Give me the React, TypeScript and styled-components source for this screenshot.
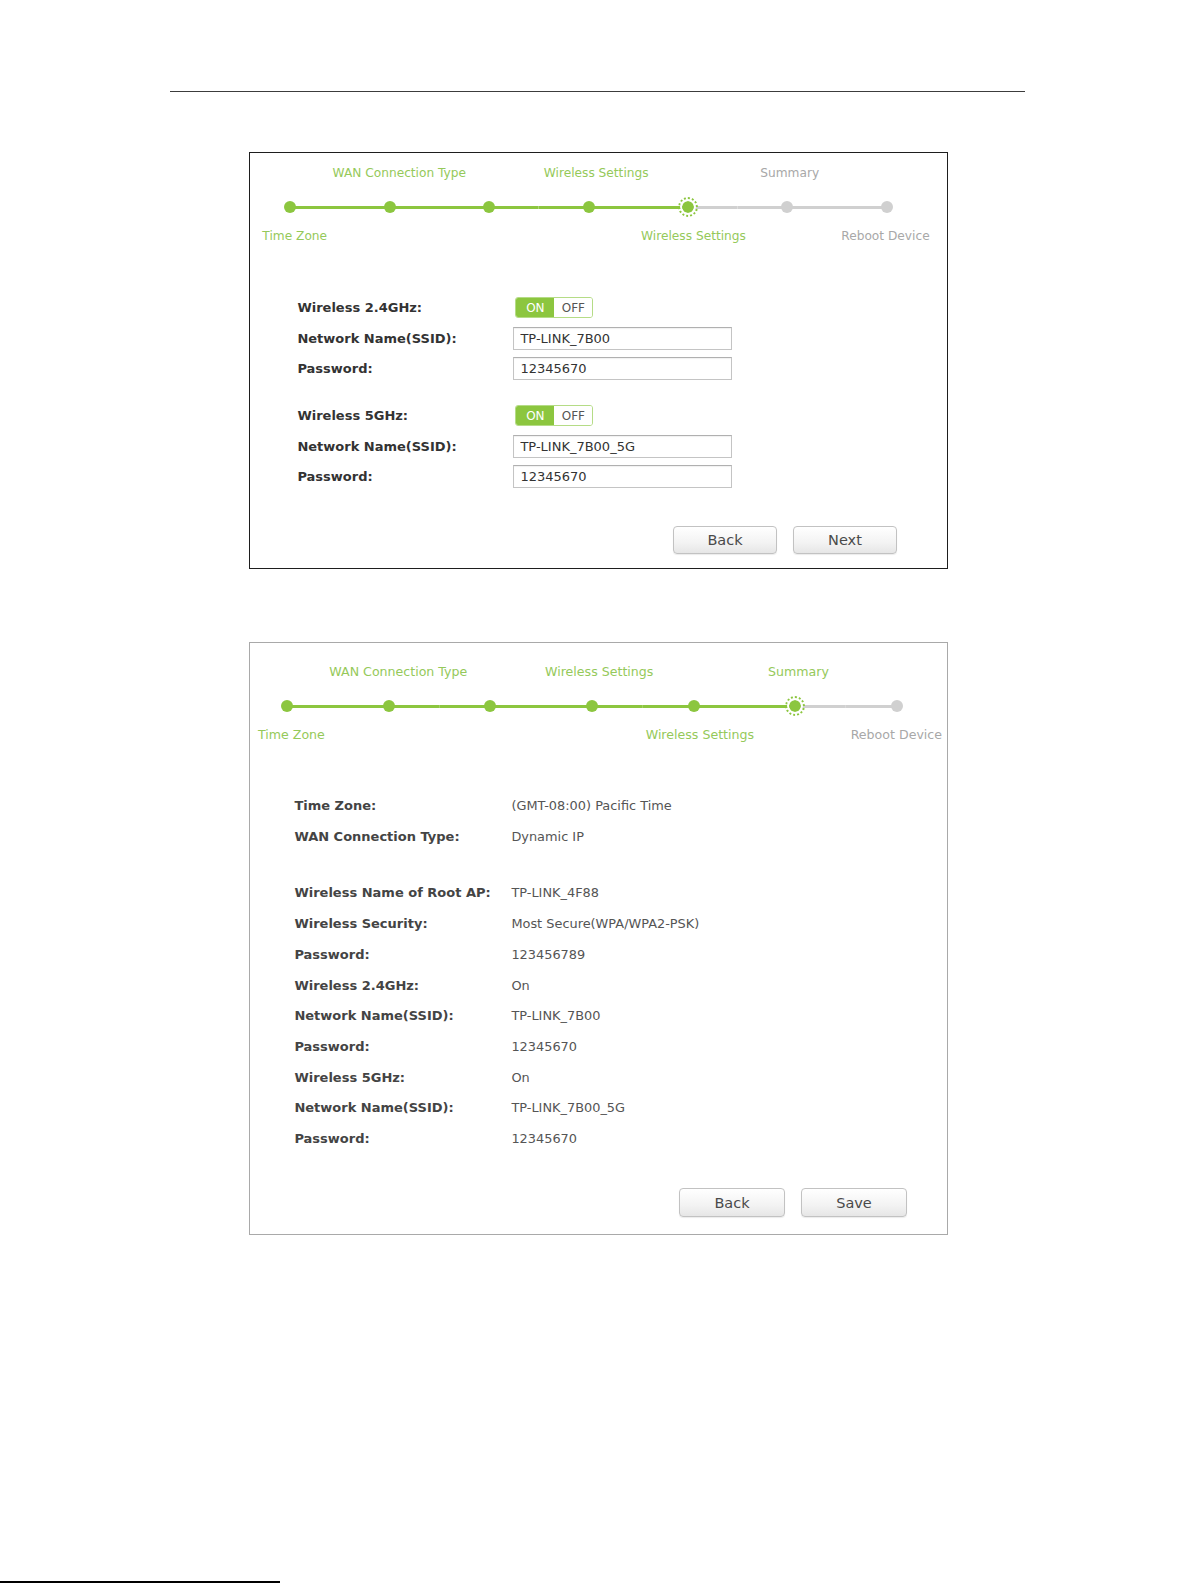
import React from "react";
import styled, { createGlobalStyle } from "styled-components";

const GREEN = "#8cc63f";
const GREEN_TEXT = "#95c95a";
const GREY = "#d0d0d0";
const GREY_TEXT = "#a8a8a8";

const GlobalStyle = createGlobalStyle`
  html, body {
    margin: 0;
    padding: 0;
    background: #ffffff;
    overflow: hidden;
  }
  body {
    font-family: "DejaVu Sans", Verdana, sans-serif;
  }
`;

const Page = styled.div`
  width: 1197px;
  height: 1583px;
  padding-top: 91px;
  box-sizing: border-box;
  display: flex;
  flex-direction: column;
`;

const HeaderRule = styled.div`
  margin-left: 170px;
  width: 855px;
  height: 1px;
  background: #3c3c3c;
`;

const FooterRule = styled.div`
  margin-top: auto;
  width: 280px;
  height: 2px;
  background: #000;
`;

const Panel = styled.div<{ $top: number; $border: string; $pt: number; $pr: number; $pb: number }>`
  margin-top: ${(p) => p.$top}px;
  margin-left: 249px;
  width: 699px;
  box-sizing: border-box;
  border: 1px solid ${(p) => p.$border};
  padding: ${(p) => p.$pt}px ${(p) => p.$pr}px ${(p) => p.$pb}px 0;
  display: flex;
  flex-direction: column;
  background: #fff;
`;

const Stepper = styled.div<{ $gap: number; $offset: number; $size: number }>`
  display: grid;
  grid-template-columns: repeat(7, ${(p) => p.$gap}px);
  margin-left: ${(p) => p.$offset}px;
  font-size: ${(p) => p.$size}px;
`;

const StepLabel = styled.div<{ $col: number; $row: number; $on: boolean; $dx: number }>`
  grid-column: ${(p) => p.$col + 1};
  grid-row: ${(p) => p.$row};
  display: flex;
  justify-content: center;
  height: 16px;
  line-height: 16px;
  white-space: nowrap;
  color: ${(p) => (p.$on ? GREEN_TEXT : GREY_TEXT)};
  transform: translateX(${(p) => p.$dx}px);
`;

const StepCell = styled.div<{ $left: string; $right: string; $mt: number }>`
  grid-row: 2;
  height: 20px;
  margin: ${(p) => p.$mt}px 0 11px;
  display: flex;
  align-items: center;
  justify-content: center;
  background-image: linear-gradient(
    to right,
    ${(p) => p.$left} 0,
    ${(p) => p.$left} 50%,
    ${(p) => p.$right} 50%,
    ${(p) => p.$right} 100%
  );
  background-size: 100% 3px;
  background-position: center;
  background-repeat: no-repeat;
`;

const Dot = styled.span<{ $state: "done" | "current" | "todo" }>`
  box-sizing: border-box;
  border-radius: 50%;
  width: ${(p) => (p.$state === "current" ? 20 : 12)}px;
  height: ${(p) => (p.$state === "current" ? 20 : 12)}px;
  background: ${(p) => (p.$state === "todo" ? GREY : GREEN)};
  background-clip: content-box;
  border: ${(p) => (p.$state === "current" ? `2px dotted ${GREEN}` : "none")};
  padding: ${(p) => (p.$state === "current" ? 2 : 0)}px;
  box-shadow: ${(p) => (p.$state === "current" ? "inset 0 0 0 2px #fff" : "none")};
`;

const Form = styled.div<{ $top: number; $left: number }>`
  margin-top: ${(p) => p.$top}px;
  margin-left: ${(p) => p.$left}px;
  display: flex;
  flex-direction: column;
`;

const Group = styled.div<{ $gap: number }>`
  display: flex;
  flex-direction: column;
  & + & {
    margin-top: ${(p) => p.$gap}px;
  }
`;

const Row = styled.div<{ $label: number; $h: number; $mb?: number }>`
  display: grid;
  grid-template-columns: ${(p) => p.$label}px 1fr;
  align-items: center;
  height: ${(p) => p.$h}px;
  margin-bottom: ${(p) => p.$mb ?? 0}px;
  &:last-child {
    margin-bottom: 0;
  }
`;

const Label = styled.span<{ $color: string }>`
  font-size: 13px;
  font-weight: bold;
  color: ${(p) => p.$color};
  white-space: nowrap;
`;

const Value = styled.span`
  font-size: 12.9px;
  color: #555;
  white-space: nowrap;
`;

const TextInput = styled.input`
  box-sizing: border-box;
  width: 219px;
  height: 23px;
  margin: 0;
  padding: 0 6px;
  border: 1px solid #c4c4c4;
  border-top-color: #b0b0b0;
  box-shadow: inset 0 1px 1px rgba(0, 0, 0, 0.06);
  font-family: "DejaVu Sans", Verdana, sans-serif;
  font-size: 13px;
  color: #333;
  outline: none;
`;

const Toggle = styled.div`
  display: flex;
  width: 78px;
  height: 21px;
  margin-left: 2px;
  box-sizing: border-box;
  border: 1px solid #b5dc86;
  border-radius: 3px;
  overflow: hidden;
  font-size: 12px;
`;

const ToggleHalf = styled.span<{ $active: boolean }>`
  flex: 1;
  display: flex;
  align-items: center;
  justify-content: center;
  background: ${(p) => (p.$active ? GREEN : "#fff")};
  color: ${(p) => (p.$active ? "#fff" : "#555")};
`;

const Actions = styled.div<{ $top: number }>`
  margin-top: ${(p) => p.$top}px;
  display: flex;
  justify-content: flex-end;
  gap: 16px;
`;

const Button = styled.button<{ $w: number; $h: number }>`
  width: ${(p) => p.$w}px;
  height: ${(p) => p.$h}px;
  box-sizing: border-box;
  border: 1px solid #c2c2c2;
  border-radius: 4px;
  background: linear-gradient(to bottom, #ffffff 0%, #f3f3f3 60%, #e6e6e6 100%);
  box-shadow: 0 1px 1px rgba(0, 0, 0, 0.08);
  font-family: "DejaVu Sans", Verdana, sans-serif;
  font-size: 14.5px;
  color: #4a4a4a;
  padding: 0;
  cursor: pointer;
`;

type StepText = { col: number; text: string; dx: number };
type StepConfig = {
  gap: number;
  offset: number;
  size: number;
  dotTop: number;
  current: number;
  top: StepText[];
  bottom: StepText[];
};

const StepBar: React.FC<{ cfg: StepConfig }> = ({ cfg }) => {
  const lineColor = (i: number) => (i <= cfg.current ? GREEN : GREY);
  return (
    <Stepper $gap={cfg.gap} $offset={cfg.offset} $size={cfg.size}>
      {cfg.top.map((t) => (
        <StepLabel key={"t" + t.col} $col={t.col} $row={1} $dx={t.dx} $on={t.col <= cfg.current}>
          {t.text}
        </StepLabel>
      ))}
      {Array.from({ length: 7 }).map((_, i) => (
        <StepCell
          key={i}
          $mt={cfg.dotTop}
          $left={i === 0 ? "transparent" : lineColor(i)}
          $right={i === 6 ? "transparent" : lineColor(i + 1)}
        >
          <Dot $state={i < cfg.current ? "done" : i === cfg.current ? "current" : "todo"} />
        </StepCell>
      ))}
      {cfg.bottom.map((t) => (
        <StepLabel key={"b" + t.col} $col={t.col} $row={3} $dx={t.dx} $on={t.col <= cfg.current}>
          {t.text}
        </StepLabel>
      ))}
    </Stepper>
  );
};

const wirelessSteps: StepConfig = {
  gap: 99.4,
  offset: -9.3,
  size: 12.2,
  dotTop: 16,
  current: 4,
  top: [
    { col: 1, text: "WAN Connection Type", dx: 9.5 },
    { col: 3, text: "Wireless Settings", dx: 7.6 },
    { col: 5, text: "Summary", dx: 2.4 },
  ],
  bottom: [
    { col: 0, text: "Time Zone", dx: 4.3 },
    { col: 4, text: "Wireless Settings", dx: 5.5 },
    { col: 6, text: "Reboot Device", dx: -1.3 },
  ],
};

const summarySteps: StepConfig = {
  gap: 101.6,
  offset: -13.5,
  size: 12.6,
  dotTop: 16.5,
  current: 5,
  top: [
    { col: 1, text: "WAN Connection Type", dx: 9.4 },
    { col: 3, text: "Wireless Settings", dx: 7.1 },
    { col: 5, text: "Summary", dx: 3.2 },
  ],
  bottom: [
    { col: 0, text: "Time Zone", dx: 4.1 },
    { col: 4, text: "Wireless Settings", dx: 6.2 },
    { col: 6, text: "Reboot Device", dx: -0.5 },
  ],
};

const bands = [
  { name: "Wireless 2.4GHz:", ssid: "TP-LINK_7B00", password: "12345670" },
  { name: "Wireless 5GHz:", ssid: "TP-LINK_7B00_5G", password: "12345670" },
];

const summaryGroups: [string, string][][] = [
  [
    ["Time Zone:", "(GMT-08:00) Pacific Time"],
    ["WAN Connection Type:", "Dynamic IP"],
  ],
  [
    ["Wireless Name of Root AP:", "TP-LINK_4F88"],
    ["Wireless Security:", "Most Secure(WPA/WPA2-PSK)"],
    ["Password:", "123456789"],
    ["Wireless 2.4GHz:", "On"],
    ["Network Name(SSID):", "TP-LINK_7B00"],
    ["Password:", "12345670"],
    ["Wireless 5GHz:", "On"],
    ["Network Name(SSID):", "TP-LINK_7B00_5G"],
    ["Password:", "12345670"],
  ],
];

const App: React.FC = () => {
  return (
    <>
      <GlobalStyle />
      <Page>
        <HeaderRule />

        <Panel $top={60} $border="#1e1e1e" $pt={12} $pr={50} $pb={13.5}>
          <StepBar cfg={wirelessSteps} />
          <Form $top={53.4} $left={47.4}>
            {bands.map((b) => (
              <Group key={b.name} $gap={22.7}>
                <Row $label={216} $h={21} $mb={8.8}>
                  <Label $color="#333">{b.name}</Label>
                  <Toggle>
                    <ToggleHalf $active>ON</ToggleHalf>
                    <ToggleHalf $active={false}>OFF</ToggleHalf>
                  </Toggle>
                </Row>
                <Row $label={216} $h={23} $mb={6.7}>
                  <Label $color="#333">Network Name(SSID):</Label>
                  <TextInput readOnly value={b.ssid} />
                </Row>
                <Row $label={216} $h={23}>
                  <Label $color="#333">Password:</Label>
                  <TextInput readOnly value={b.password} />
                </Row>
              </Group>
            ))}
          </Form>
          <Actions $top={38.5}>
            <Button $w={104} $h={28}>Back</Button>
            <Button $w={104} $h={28}>Next</Button>
          </Actions>
        </Panel>

        <Panel $top={73} $border="#a9a9a9" $pt={21} $pr={40} $pb={16.5}>
          <StepBar cfg={summarySteps} />
          <Form $top={47.2} $left={44.4}>
            {summaryGroups.map((g, gi) => (
              <Group key={gi} $gap={25.6}>
                {g.map(([k, v], i) => (
                  <Row key={i} $label={217} $h={30.7}>
                    <Label $color="#444">{k}</Label>
                    <Value>{v}</Value>
                  </Row>
                ))}
              </Group>
            ))}
          </Form>
          <Actions $top={34.7}>
            <Button $w={106} $h={29}>Back</Button>
            <Button $w={106} $h={29}>Save</Button>
          </Actions>
        </Panel>

        <FooterRule />
      </Page>
    </>
  );
};

export default App;
